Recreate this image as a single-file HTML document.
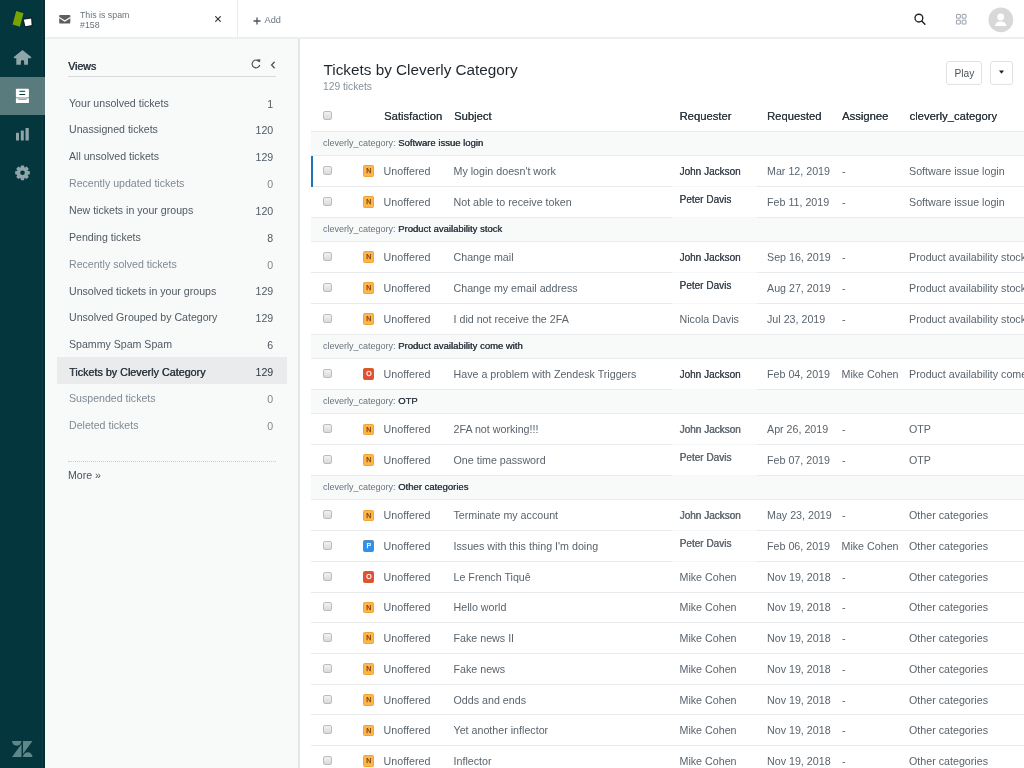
<!DOCTYPE html><html><head><meta charset="utf-8"><style>

*{box-sizing:border-box}
html,body{margin:0;padding:0}
body{width:1024px;height:768px;overflow:hidden;position:relative;background:#fff;font-family:"Liberation Sans",sans-serif;color:#2f3941}
.a{position:absolute}
.t{position:absolute;white-space:nowrap;line-height:1}
#nav{left:0;top:0;width:45px;height:768px;background:#03363d}
#top{left:45px;top:0;width:979px;height:39px;background:#fff;border-bottom:2px solid #eceef0;z-index:2}
#views{left:45px;top:38px;width:255px;height:730px;background:#f8f9f9;border-right:2px solid #e3e6e8}
.vi{position:absolute;left:69px;font-size:10.6px;white-space:nowrap;line-height:1}
.vc{position:absolute;right:26px;font-size:10.6px;white-space:nowrap;line-height:1;text-align:right}
.row{position:absolute;left:311px;width:713px;border-bottom:1px solid #e9ebed;background:#fff}
.grp{position:absolute;left:311px;width:713px;border-bottom:1px solid #e9ebed;background:#f8f9f9}
.cb{position:absolute;left:322.6px;width:9px;height:9px;border:1px solid #bcbcbc;border-radius:2px;background:linear-gradient(#f2f2f2,#dadada)}
.bd{position:absolute;left:363.3px;width:11.1px;height:11.7px;border-radius:2.2px;font-size:6.9px;font-weight:normal;line-height:11.7px;text-align:center;box-shadow:inset 0 0 0 0.7px rgba(200,120,0,0.35);-webkit-text-stroke:0.25px currentColor}
.c{position:absolute;white-space:nowrap;line-height:1;font-size:10.7px;color:#5a646d}

</style></head><body><div id="wrap" style="position:absolute;left:0;top:0;width:1024px;height:768px;will-change:transform">
<div id="nav" class="a">
<div class="a" style="left:41.6px;top:0;width:1.6px;height:768px;background:#0f3a40"></div><div class="a" style="left:43.2px;top:0;width:1.8px;height:768px;background:#022e34"></div>
<svg class="a" style="left:0;top:0" width="45" height="38" viewBox="0 0 45 38"><polygon points="16.2,10.9 23.5,13.3 19.8,26.8 12.6,24.5" fill="#78a300"/><polygon points="23.3,19.3 31.6,18 32.1,25.5 25,26.8" fill="#fff" stroke="#000" stroke-width="0.8"/></svg>
<svg class="a" style="left:0;top:38px" width="45" height="38" viewBox="0 0 45 38"><path d="M22.5 12 L31.2 19.1 Q31.6 20.3 30.3 20.3 L28 20.3 L28 26.7 L24.1 26.7 L24.1 23.6 A1.6 1.6 0 0 0 20.9 23.6 L20.9 26.7 L16.3 26.7 L16.3 20.3 L14.7 20.3 Q13.4 20.3 13.8 19.1 Z" fill="#8fa5a7"/></svg>
<div class="a" style="left:0;top:76.5px;width:45px;height:38.4px;background:#5a7b7d"></div>
<svg class="a" style="left:0;top:76px" width="45" height="39" viewBox="0 0 45 39"><rect x="15.9" y="12.8" width="13" height="8.8" rx="0.8" fill="#fff"/><rect x="18.6" y="21.4" width="7.8" height="2.2" fill="#b9c8c8"/><path d="M19.8 15.3 H24.8 M19.8 18.5 H24.8" stroke="#03363d" stroke-width="1.1" stroke-linecap="round"/><path d="M15.9 22.2 H18.2 L18.8 24.1 H26.2 L26.8 22.2 H28.9 V26.5 Q28.9 27 28.4 27 H16.4 Q15.9 27 15.9 26.5 Z" fill="#fff"/></svg>
<svg class="a" style="left:0;top:115px" width="45" height="38" viewBox="0 0 45 38"><rect x="16" y="17.7" width="3" height="7.8" rx="0.6" fill="#8fa5a7"/><rect x="20.8" y="15.6" width="3" height="9.9" rx="0.6" fill="#8fa5a7"/><rect x="25.5" y="13" width="3.3" height="12.5" rx="0.6" fill="#8fa5a7"/></svg>
<svg class="a" style="left:0;top:153px" width="45" height="38" viewBox="0 0 45 38"><polygon points="29.85,18.31 29.85,21.29 27.47,21.90 27.50,21.83 28.75,23.94 26.64,26.05 24.53,24.80 24.60,24.77 23.99,27.15 21.01,27.15 20.40,24.77 20.47,24.80 18.36,26.05 16.25,23.94 17.50,21.83 17.53,21.90 15.15,21.29 15.15,18.31 17.53,17.70 17.50,17.77 16.25,15.66 18.36,13.55 20.47,14.80 20.40,14.83 21.01,12.45 23.99,12.45 24.60,14.83 24.53,14.80 26.64,13.55 28.75,15.66 27.50,17.77 27.47,17.70" fill="#8fa5a7"/><circle cx="22.5" cy="19.80000000000001" r="2.3" fill="#03363d"/></svg>
<svg class="a" style="left:0;top:730px" width="45" height="38" viewBox="0 0 45 38"><path d="M12 11 L21.5 11 A4.75 4.75 0 0 1 12 11 Z" fill="#5f8688"/><path d="M21.5 14 L21.5 27 L12 27 Z" fill="#5f8688"/><path d="M23 11 L32.5 11 L23 24 Z" fill="#5f8688"/><path d="M23 27 A4.75 4.75 0 0 1 32.5 27 Z" fill="#5f8688"/></svg>
</div>
<div id="top" class="a">
<div class="a" style="left:192px;top:0;width:1px;height:37px;background:#e9ebed"></div>
<svg class="a" style="left:14px;top:14px" width="12" height="11" viewBox="0 0 12 11"><rect x="0.2" y="1" width="11.1" height="8.4" rx="0.7" fill="#5e5e5e"/><path d="M0.1 3.4 L5.75 7.1 L11.4 3.4" stroke="#fff" stroke-width="1.15" fill="none"/></svg>
<div class="t" style="left:35px;top:10.5px;font-size:8.8px;color:#68737d">This is spam</div>
<div class="t" style="left:35px;top:21px;font-size:8.8px;color:#68737d">#158</div>
<svg class="a" style="left:170px;top:16px" width="6" height="6" viewBox="0 0 6 6"><path d="M0.3 0.3 L5.7 5.7 M5.7 0.3 L0.3 5.7" stroke="#2f3941" stroke-width="1.2"/></svg>
<svg class="a" style="left:207.5px;top:16.5px" width="8" height="8" viewBox="0 0 8 8"><path d="M4 0.5 V7.5 M0.5 4 H7.5" stroke="#49545c" stroke-width="1.3"/></svg>
<div class="t" style="left:219.5px;top:16px;font-size:9.2px;color:#68737d">Add</div>
<svg class="a" style="left:867px;top:8px" width="18" height="20" viewBox="0 0 18 20"><circle cx="6.9" cy="10.1" r="3.9" stroke="#1f262b" stroke-width="1.35" fill="none"/><path d="M9.8 13 L12.9 16.2" stroke="#1f262b" stroke-width="1.5" stroke-linecap="round"/></svg>
<svg class="a" style="left:909px;top:12px" width="14" height="14" viewBox="0 0 14 14"><g fill="none" stroke="#8c969f" stroke-width="0.9"><rect x="2.5" y="2.4" width="3.8" height="3.8" rx="0.3"/><rect x="8.2" y="2.4" width="3.8" height="3.8" rx="0.3"/><rect x="2.5" y="8.2" width="3.8" height="3.8" rx="0.3"/><rect x="8.2" y="8.2" width="3.8" height="3.8" rx="0.3"/></g></svg>
<svg class="a" style="left:943px;top:7px" width="26" height="26" viewBox="0 0 26 26"><circle cx="12.8" cy="12.8" r="12.4" fill="#d8d8d8"/><circle cx="12.7" cy="10" r="3.4" fill="#fff"/><path d="M7 19 Q7.5 14.6 12.7 14.6 Q17.9 14.6 18.5 19 Z" fill="#fff"/></svg>
</div>
<div id="views" class="a">
<div class="t" style="left:23px;top:23.3px;font-size:10.6px;color:#2f3941;text-shadow:0.4px 0 0 #2f3941">Views</div>
<div class="a" style="left:23px;top:37.5px;width:208px;height:1px;background:#d8dcde"></div>
<svg class="a" style="left:205px;top:20px" width="12" height="12" viewBox="0 0 12 12"><path d="M9.3 3.8 A3.9 3.9 0 1 0 9.8 7" stroke="#49545c" stroke-width="1.15" fill="none"/><path d="M7 1.6 L10.3 1.3 L10 4.6 Z" fill="#49545c"/></svg>
<svg class="a" style="left:225px;top:23px" width="6" height="8" viewBox="0 0 6 8"><path d="M4.6 0.8 L1.6 4 L4.6 7.2" stroke="#49545c" stroke-width="1.3" fill="none"/></svg>
<div class="t" style="left:24px;top:59.60px;font-size:10.6px;color:#505a63">Your unsolved tickets</div>
<div class="t" style="right:24.8px;top:60.50px;font-size:10.6px;color:#505a63">1</div>
<div class="t" style="left:24px;top:86.45px;font-size:10.6px;color:#505a63">Unassigned tickets</div>
<div class="t" style="right:24.8px;top:87.35px;font-size:10.6px;color:#505a63">120</div>
<div class="t" style="left:24px;top:113.30px;font-size:10.6px;color:#505a63">All unsolved tickets</div>
<div class="t" style="right:24.8px;top:114.20px;font-size:10.6px;color:#505a63">129</div>
<div class="t" style="left:24px;top:140.15px;font-size:10.6px;color:#7f8a94">Recently updated tickets</div>
<div class="t" style="right:24.8px;top:141.05px;font-size:10.6px;color:#7f8a94">0</div>
<div class="t" style="left:24px;top:167.00px;font-size:10.6px;color:#505a63">New tickets in your groups</div>
<div class="t" style="right:24.8px;top:167.90px;font-size:10.6px;color:#505a63">120</div>
<div class="t" style="left:24px;top:193.85px;font-size:10.6px;color:#505a63">Pending tickets</div>
<div class="t" style="right:24.8px;top:194.75px;font-size:10.6px;color:#505a63">8</div>
<div class="t" style="left:24px;top:220.70px;font-size:10.6px;color:#7f8a94">Recently solved tickets</div>
<div class="t" style="right:24.8px;top:221.60px;font-size:10.6px;color:#7f8a94">0</div>
<div class="t" style="left:24px;top:247.55px;font-size:10.6px;color:#505a63">Unsolved tickets in your groups</div>
<div class="t" style="right:24.8px;top:248.45px;font-size:10.6px;color:#505a63">129</div>
<div class="t" style="left:24px;top:274.40px;font-size:10.6px;color:#505a63">Unsolved Grouped by Category</div>
<div class="t" style="right:24.8px;top:275.30px;font-size:10.6px;color:#505a63">129</div>
<div class="t" style="left:24px;top:301.25px;font-size:10.6px;color:#505a63">Spammy Spam Spam</div>
<div class="t" style="right:24.8px;top:302.15px;font-size:10.6px;color:#505a63">6</div>
<div class="a" style="left:11.8px;top:319.30px;width:229.8px;height:26.4px;background:#e9ebed"></div>
<div class="t" style="left:24px;top:328.60px;font-size:10.75px;color:#2f3941;text-shadow:0.4px 0 0 #2f3941">Tickets by Cleverly Category</div>
<div class="t" style="right:24.8px;top:329.00px;font-size:10.6px;color:#2f3941">129</div>
<div class="t" style="left:24px;top:354.95px;font-size:10.6px;color:#7f8a94">Suspended tickets</div>
<div class="t" style="right:24.8px;top:355.85px;font-size:10.6px;color:#7f8a94">0</div>
<div class="t" style="left:24px;top:381.80px;font-size:10.6px;color:#7f8a94">Deleted tickets</div>
<div class="t" style="right:24.8px;top:382.70px;font-size:10.6px;color:#7f8a94">0</div>
<div class="a" style="left:23px;top:423px;width:208px;height:0;border-top:1px dotted #c8cdd1"></div>
<div class="t" style="left:23px;top:432.40px;font-size:10.6px;color:#49545c">More »</div>
</div>
<div class="t" style="left:323.5px;top:62px;font-size:15.3px;color:#1f262b">Tickets by Cleverly Category</div>
<div class="t" style="left:323px;top:81.5px;font-size:10.25px;color:#87929d">129 tickets</div>
<div class="a" style="left:946px;top:61.2px;width:36px;height:23.4px;border:1.4px solid #dfe3e6;border-radius:3px"></div>
<div class="t" style="left:954.5px;top:68.8px;font-size:10.2px;color:#49545c">Play</div>
<div class="a" style="left:990px;top:61.2px;width:22.6px;height:23.4px;border:1.4px solid #dfe3e6;border-radius:3px"></div>
<svg class="a" style="left:998px;top:70px" width="7" height="4" viewBox="0 0 7 4"><path d="M1 0.6 L6 0.6 L3.5 3.7 Z" fill="#1f262b"/></svg>
<div class="a" style="left:311px;top:131px;width:713px;height:1px;background:#e9ebed"></div>
<div class="cb" style="top:111px"></div>
<div class="c" style="left:384px;top:111px;color:#2f3941;font-size:11.25px;text-shadow:0.2px 0 0 #2f3941">Satisfaction</div>
<div class="c" style="left:454px;top:111px;color:#2f3941;font-size:11.25px;text-shadow:0.2px 0 0 #2f3941">Subject</div>
<div class="c" style="left:679.5px;top:111px;color:#2f3941;font-size:11.25px;text-shadow:0.2px 0 0 #2f3941">Requester</div>
<div class="c" style="left:767px;top:111px;color:#2f3941;font-size:11.25px;text-shadow:0.2px 0 0 #2f3941">Requested</div>
<div class="c" style="left:842px;top:111px;color:#2f3941;font-size:11.25px;text-shadow:0.2px 0 0 #2f3941">Assignee</div>
<div class="c" style="left:909.5px;top:111px;color:#2f3941;font-size:11.25px;text-shadow:0.2px 0 0 #2f3941">cleverly_category</div>
<div class="grp" style="top:131.80px;height:24.58px"></div>
<div class="t" style="left:323px;top:138.40px;font-size:9px;color:#68737d">cleverly_category: <span style="color:#2f3941;font-size:9.5px;text-shadow:0.35px 0 0 #2f3941">Software issue login</span></div>
<div class="row" style="top:156.38px;height:30.72px"></div>
<div class="a" style="left:311px;top:156.38px;width:2px;height:30.22px;background:#1f73b7"></div>
<div class="cb" style="top:166.24px"></div>
<div class="bd" style="top:165.44px;background:#ffb648;color:#703b15">N</div>
<div class="c" style="left:383.6px;top:166.14px">Unoffered</div>
<div class="c" style="left:453.5px;top:166.14px">My login doesn't work</div>
<div class="c" style="left:679.5px;top:167.24px;font-size:10px;color:#3c4650;text-shadow:0.25px 0 0 #3c4650;">John Jackson</div>
<div class="a" style="left:671.7px;top:186.10px;width:85.6px;height:1px;background:#f6f7f8"></div>
<div class="c" style="left:767px;top:166.14px">Mar 12, 2019</div>
<div class="c" style="left:842px;top:166.14px">-</div>
<div class="c" style="left:909px;top:166.14px">Software issue login</div>
<div class="row" style="top:187.10px;height:30.72px"></div>
<div class="cb" style="top:196.96px"></div>
<div class="bd" style="top:196.16px;background:#ffb648;color:#703b15">N</div>
<div class="c" style="left:383.6px;top:196.86px">Unoffered</div>
<div class="c" style="left:453.5px;top:196.86px">Not able to receive token</div>
<div class="c" style="left:679.5px;top:194.86px;font-size:10px;color:#3c4650;text-shadow:0.25px 0 0 #3c4650;">Peter Davis</div>
<div class="a" style="left:671.7px;top:216.82px;width:85.6px;height:1px;background:#f6f7f8"></div>
<div class="c" style="left:767px;top:196.86px">Feb 11, 2019</div>
<div class="c" style="left:842px;top:196.86px">-</div>
<div class="c" style="left:909px;top:196.86px">Software issue login</div>
<div class="grp" style="top:217.82px;height:24.58px"></div>
<div class="t" style="left:323px;top:224.42px;font-size:9px;color:#68737d">cleverly_category: <span style="color:#2f3941;font-size:9.5px;text-shadow:0.35px 0 0 #2f3941">Product availability stock</span></div>
<div class="row" style="top:242.40px;height:30.72px"></div>
<div class="cb" style="top:252.26px"></div>
<div class="bd" style="top:251.46px;background:#ffb648;color:#703b15">N</div>
<div class="c" style="left:383.6px;top:252.16px">Unoffered</div>
<div class="c" style="left:453.5px;top:252.16px">Change mail</div>
<div class="c" style="left:679.5px;top:253.26px;font-size:10px;color:#3c4650;text-shadow:0.25px 0 0 #3c4650;">John Jackson</div>
<div class="a" style="left:671.7px;top:272.12px;width:85.6px;height:1px;background:#f6f7f8"></div>
<div class="c" style="left:767px;top:252.16px">Sep 16, 2019</div>
<div class="c" style="left:842px;top:252.16px">-</div>
<div class="c" style="left:909px;top:252.16px">Product availability stock</div>
<div class="row" style="top:273.12px;height:30.72px"></div>
<div class="cb" style="top:282.98px"></div>
<div class="bd" style="top:282.18px;background:#ffb648;color:#703b15">N</div>
<div class="c" style="left:383.6px;top:282.88px">Unoffered</div>
<div class="c" style="left:453.5px;top:282.88px">Change my email address</div>
<div class="c" style="left:679.5px;top:280.88px;font-size:10px;color:#3c4650;text-shadow:0.25px 0 0 #3c4650;">Peter Davis</div>
<div class="a" style="left:671.7px;top:302.84px;width:85.6px;height:1px;background:#f6f7f8"></div>
<div class="c" style="left:767px;top:282.88px">Aug 27, 2019</div>
<div class="c" style="left:842px;top:282.88px">-</div>
<div class="c" style="left:909px;top:282.88px">Product availability stock</div>
<div class="row" style="top:303.84px;height:30.72px"></div>
<div class="cb" style="top:313.70px"></div>
<div class="bd" style="top:312.90px;background:#ffb648;color:#703b15">N</div>
<div class="c" style="left:383.6px;top:313.60px">Unoffered</div>
<div class="c" style="left:453.5px;top:313.60px">I did not receive the 2FA</div>
<div class="c" style="left:679.5px;top:313.60px">Nicola Davis</div>
<div class="c" style="left:767px;top:313.60px">Jul 23, 2019</div>
<div class="c" style="left:842px;top:313.60px">-</div>
<div class="c" style="left:909px;top:313.60px">Product availability stock</div>
<div class="grp" style="top:334.56px;height:24.58px"></div>
<div class="t" style="left:323px;top:341.16px;font-size:9px;color:#68737d">cleverly_category: <span style="color:#2f3941;font-size:9.5px;text-shadow:0.35px 0 0 #2f3941">Product availability come with</span></div>
<div class="row" style="top:359.14px;height:30.72px"></div>
<div class="cb" style="top:369.00px"></div>
<div class="bd" style="top:368.20px;background:#e34f32;color:#fff">O</div>
<div class="c" style="left:383.6px;top:368.90px">Unoffered</div>
<div class="c" style="left:453.5px;top:368.90px">Have a problem with Zendesk Triggers</div>
<div class="c" style="left:679.5px;top:370.00px;font-size:10px;color:#3c4650;text-shadow:0.25px 0 0 #3c4650;">John Jackson</div>
<div class="a" style="left:671.7px;top:388.86px;width:85.6px;height:1px;background:#f6f7f8"></div>
<div class="c" style="left:767px;top:368.90px">Feb 04, 2019</div>
<div class="c" style="left:841.5px;top:368.90px">Mike Cohen</div>
<div class="c" style="left:909px;top:368.90px">Product availability come with</div>
<div class="grp" style="top:389.86px;height:24.58px"></div>
<div class="t" style="left:323px;top:396.46px;font-size:9px;color:#68737d">cleverly_category: <span style="color:#2f3941;font-size:9.5px;text-shadow:0.35px 0 0 #2f3941">OTP</span></div>
<div class="row" style="top:414.44px;height:30.72px"></div>
<div class="cb" style="top:424.30px"></div>
<div class="bd" style="top:423.50px;background:#ffb648;color:#703b15">N</div>
<div class="c" style="left:383.6px;top:424.20px">Unoffered</div>
<div class="c" style="left:453.5px;top:424.20px">2FA not working!!!</div>
<div class="c" style="left:679.5px;top:425.30px;font-size:10px;color:#3c4650;text-shadow:0.25px 0 0 #3c4650;filter:blur(0.6px);text-shadow:0.45px 0 0 #5f6972;color:#5f6972;">John Jackson</div>
<div class="a" style="left:671.7px;top:444.16px;width:85.6px;height:1px;background:#f6f7f8"></div>
<div class="c" style="left:767px;top:424.20px">Apr 26, 2019</div>
<div class="c" style="left:842px;top:424.20px">-</div>
<div class="c" style="left:909px;top:424.20px">OTP</div>
<div class="row" style="top:445.16px;height:30.72px"></div>
<div class="cb" style="top:455.02px"></div>
<div class="bd" style="top:454.22px;background:#ffb648;color:#703b15">N</div>
<div class="c" style="left:383.6px;top:454.92px">Unoffered</div>
<div class="c" style="left:453.5px;top:454.92px">One time password</div>
<div class="c" style="left:679.5px;top:452.92px;font-size:10px;color:#3c4650;text-shadow:0.25px 0 0 #3c4650;filter:blur(0.6px);text-shadow:0.45px 0 0 #5f6972;color:#5f6972;">Peter Davis</div>
<div class="a" style="left:671.7px;top:474.88px;width:85.6px;height:1px;background:#f6f7f8"></div>
<div class="c" style="left:767px;top:454.92px">Feb 07, 2019</div>
<div class="c" style="left:842px;top:454.92px">-</div>
<div class="c" style="left:909px;top:454.92px">OTP</div>
<div class="grp" style="top:475.88px;height:24.58px"></div>
<div class="t" style="left:323px;top:482.48px;font-size:9px;color:#68737d">cleverly_category: <span style="color:#2f3941;font-size:9.5px;text-shadow:0.35px 0 0 #2f3941">Other categories</span></div>
<div class="row" style="top:500.46px;height:30.72px"></div>
<div class="cb" style="top:510.32px"></div>
<div class="bd" style="top:509.52px;background:#ffb648;color:#703b15">N</div>
<div class="c" style="left:383.6px;top:510.22px">Unoffered</div>
<div class="c" style="left:453.5px;top:510.22px">Terminate my account</div>
<div class="c" style="left:679.5px;top:511.32px;font-size:10px;color:#3c4650;text-shadow:0.25px 0 0 #3c4650;filter:blur(0.6px);text-shadow:0.45px 0 0 #5f6972;color:#5f6972;">John Jackson</div>
<div class="a" style="left:671.7px;top:530.18px;width:85.6px;height:1px;background:#f6f7f8"></div>
<div class="c" style="left:767px;top:510.22px">May 23, 2019</div>
<div class="c" style="left:842px;top:510.22px">-</div>
<div class="c" style="left:909px;top:510.22px">Other categories</div>
<div class="row" style="top:531.18px;height:30.72px"></div>
<div class="cb" style="top:541.04px"></div>
<div class="bd" style="top:540.24px;background:#3091ec;color:#fff">P</div>
<div class="c" style="left:383.6px;top:540.94px">Unoffered</div>
<div class="c" style="left:453.5px;top:540.94px">Issues with this thing I'm doing</div>
<div class="c" style="left:679.5px;top:538.94px;font-size:10px;color:#3c4650;text-shadow:0.25px 0 0 #3c4650;filter:blur(0.6px);text-shadow:0.45px 0 0 #5f6972;color:#5f6972;">Peter Davis</div>
<div class="a" style="left:671.7px;top:560.90px;width:85.6px;height:1px;background:#f6f7f8"></div>
<div class="c" style="left:767px;top:540.94px">Feb 06, 2019</div>
<div class="c" style="left:841.5px;top:540.94px">Mike Cohen</div>
<div class="c" style="left:909px;top:540.94px">Other categories</div>
<div class="row" style="top:561.90px;height:30.72px"></div>
<div class="cb" style="top:571.76px"></div>
<div class="bd" style="top:570.96px;background:#e34f32;color:#fff">O</div>
<div class="c" style="left:383.6px;top:571.66px">Unoffered</div>
<div class="c" style="left:453.5px;top:571.66px">Le French Tiquê</div>
<div class="c" style="left:679.5px;top:571.66px">Mike Cohen</div>
<div class="c" style="left:767px;top:571.66px">Nov 19, 2018</div>
<div class="c" style="left:842px;top:571.66px">-</div>
<div class="c" style="left:909px;top:571.66px">Other categories</div>
<div class="row" style="top:592.62px;height:30.72px"></div>
<div class="cb" style="top:602.48px"></div>
<div class="bd" style="top:601.68px;background:#ffb648;color:#703b15">N</div>
<div class="c" style="left:383.6px;top:602.38px">Unoffered</div>
<div class="c" style="left:453.5px;top:602.38px">Hello world</div>
<div class="c" style="left:679.5px;top:602.38px">Mike Cohen</div>
<div class="c" style="left:767px;top:602.38px">Nov 19, 2018</div>
<div class="c" style="left:842px;top:602.38px">-</div>
<div class="c" style="left:909px;top:602.38px">Other categories</div>
<div class="row" style="top:623.34px;height:30.72px"></div>
<div class="cb" style="top:633.20px"></div>
<div class="bd" style="top:632.40px;background:#ffb648;color:#703b15">N</div>
<div class="c" style="left:383.6px;top:633.10px">Unoffered</div>
<div class="c" style="left:453.5px;top:633.10px">Fake news II</div>
<div class="c" style="left:679.5px;top:633.10px">Mike Cohen</div>
<div class="c" style="left:767px;top:633.10px">Nov 19, 2018</div>
<div class="c" style="left:842px;top:633.10px">-</div>
<div class="c" style="left:909px;top:633.10px">Other categories</div>
<div class="row" style="top:654.06px;height:30.72px"></div>
<div class="cb" style="top:663.92px"></div>
<div class="bd" style="top:663.12px;background:#ffb648;color:#703b15">N</div>
<div class="c" style="left:383.6px;top:663.82px">Unoffered</div>
<div class="c" style="left:453.5px;top:663.82px">Fake news</div>
<div class="c" style="left:679.5px;top:663.82px">Mike Cohen</div>
<div class="c" style="left:767px;top:663.82px">Nov 19, 2018</div>
<div class="c" style="left:842px;top:663.82px">-</div>
<div class="c" style="left:909px;top:663.82px">Other categories</div>
<div class="row" style="top:684.78px;height:30.72px"></div>
<div class="cb" style="top:694.64px"></div>
<div class="bd" style="top:693.84px;background:#ffb648;color:#703b15">N</div>
<div class="c" style="left:383.6px;top:694.54px">Unoffered</div>
<div class="c" style="left:453.5px;top:694.54px">Odds and ends</div>
<div class="c" style="left:679.5px;top:694.54px">Mike Cohen</div>
<div class="c" style="left:767px;top:694.54px">Nov 19, 2018</div>
<div class="c" style="left:842px;top:694.54px">-</div>
<div class="c" style="left:909px;top:694.54px">Other categories</div>
<div class="row" style="top:715.50px;height:30.72px"></div>
<div class="cb" style="top:725.36px"></div>
<div class="bd" style="top:724.56px;background:#ffb648;color:#703b15">N</div>
<div class="c" style="left:383.6px;top:725.26px">Unoffered</div>
<div class="c" style="left:453.5px;top:725.26px">Yet another inflector</div>
<div class="c" style="left:679.5px;top:725.26px">Mike Cohen</div>
<div class="c" style="left:767px;top:725.26px">Nov 19, 2018</div>
<div class="c" style="left:842px;top:725.26px">-</div>
<div class="c" style="left:909px;top:725.26px">Other categories</div>
<div class="row" style="top:746.22px;height:30.72px"></div>
<div class="cb" style="top:756.08px"></div>
<div class="bd" style="top:755.28px;background:#ffb648;color:#703b15">N</div>
<div class="c" style="left:383.6px;top:755.98px">Unoffered</div>
<div class="c" style="left:453.5px;top:755.98px">Inflector</div>
<div class="c" style="left:679.5px;top:755.98px">Mike Cohen</div>
<div class="c" style="left:767px;top:755.98px">Nov 19, 2018</div>
<div class="c" style="left:842px;top:755.98px">-</div>
<div class="c" style="left:909px;top:755.98px">Other categories</div>
</div></body></html>
